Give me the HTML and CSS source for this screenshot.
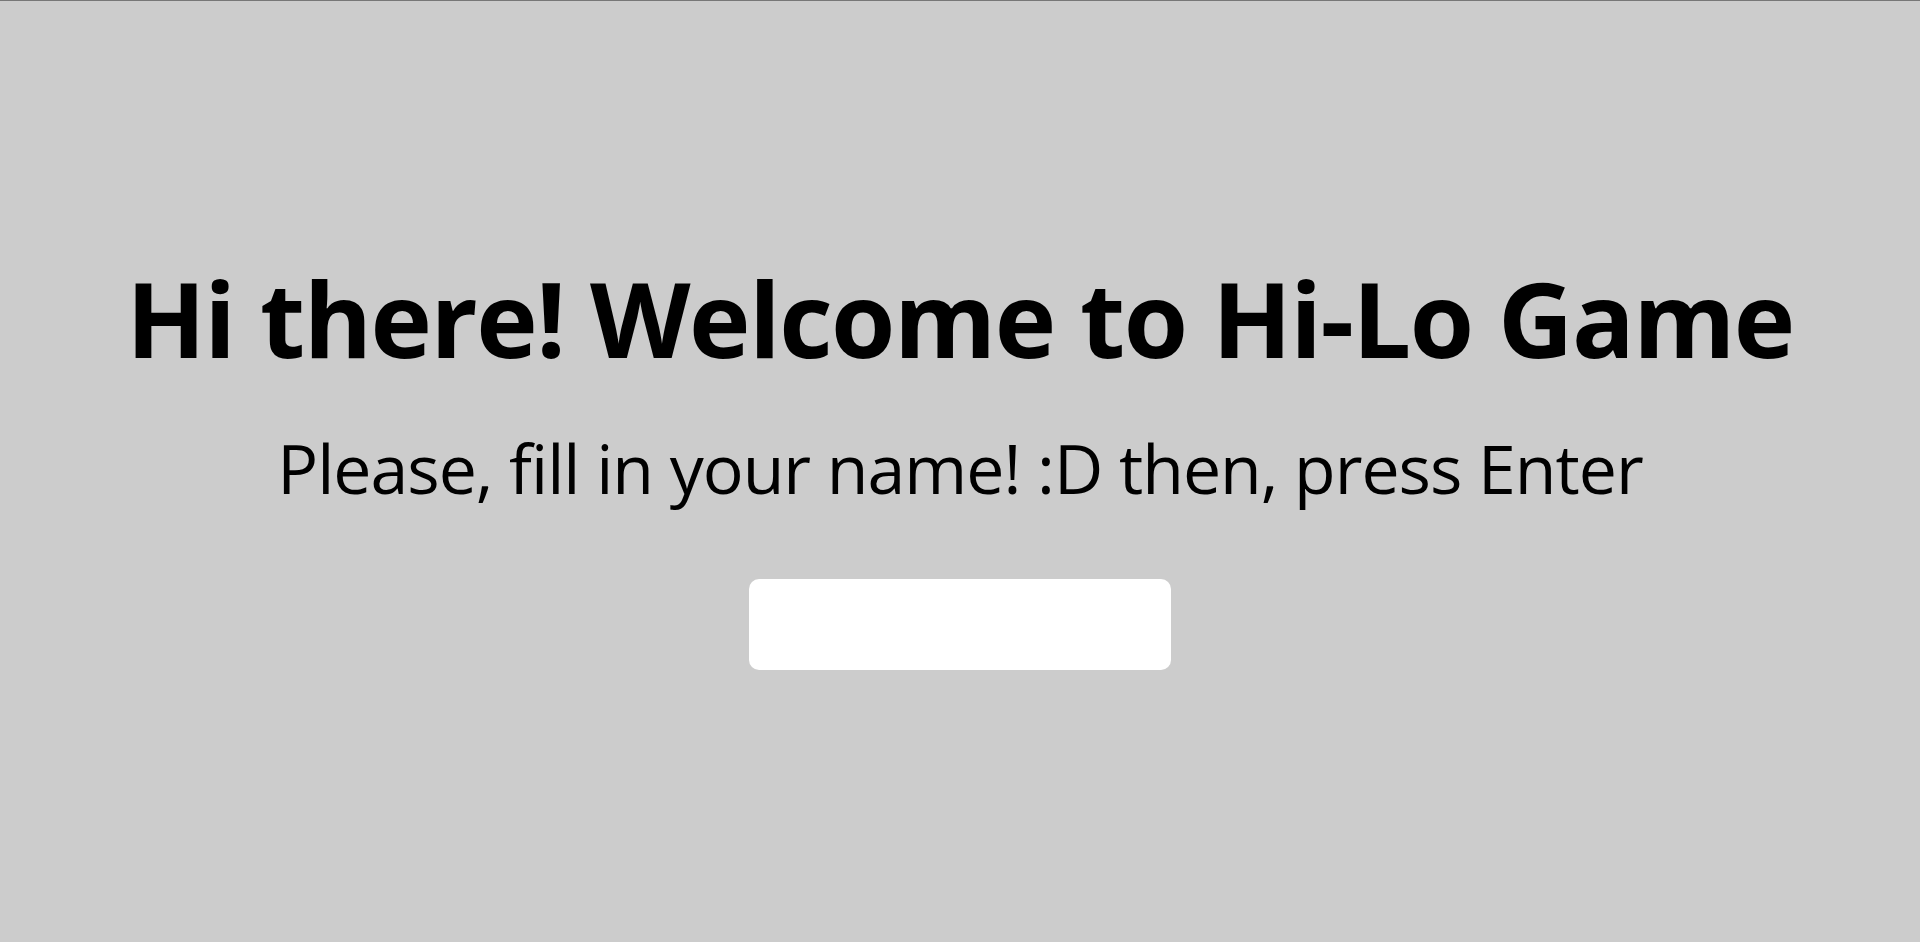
FILE: index.html
```html
<!DOCTYPE html>
<html lang="en">
<head>
<meta charset="utf-8">
<title>Hi-Lo Game</title>
<link rel="stylesheet" href="styles.css">
</head>
<body>
<main class="welcome">
  <h1 class="welcome__title">Hi there! Welcome to Hi-Lo Game</h1>
  <p class="welcome__text">Please, fill in your name! :D then, press Enter</p>
  <input class="welcome__input" type="text" aria-label="Your name">
</main>
</body>
</html>
```
FILE: styles.css
```css
html, body {
  margin: 0;
  padding: 0;
  height: 100%;
}
body {
  background: #cccccc;
  border-top: 1px solid #777777;
  box-sizing: border-box;
  font-family: "Open Sans", "Noto Sans", sans-serif;
  color: #000;
}
.welcome {
  display: flex;
  flex-direction: column;
  align-items: center;
  padding-top: 255px;
}
.welcome__title {
  margin: 0;
  font-size: 104px;
  font-weight: 700;
  line-height: 1.2;
  letter-spacing: -1.5px;
}
.welcome__text {
  margin: 46px 0 0;
  font-size: 68px;
  font-weight: 400;
  line-height: 1.2;
  letter-spacing: -1px;
}
.welcome__input {
  margin-top: 71px;
  width: 422px;
  height: 91px;
  border: none;
  border-radius: 10px;
  background: #fff;
  outline: none;
  padding: 0;
}
```
